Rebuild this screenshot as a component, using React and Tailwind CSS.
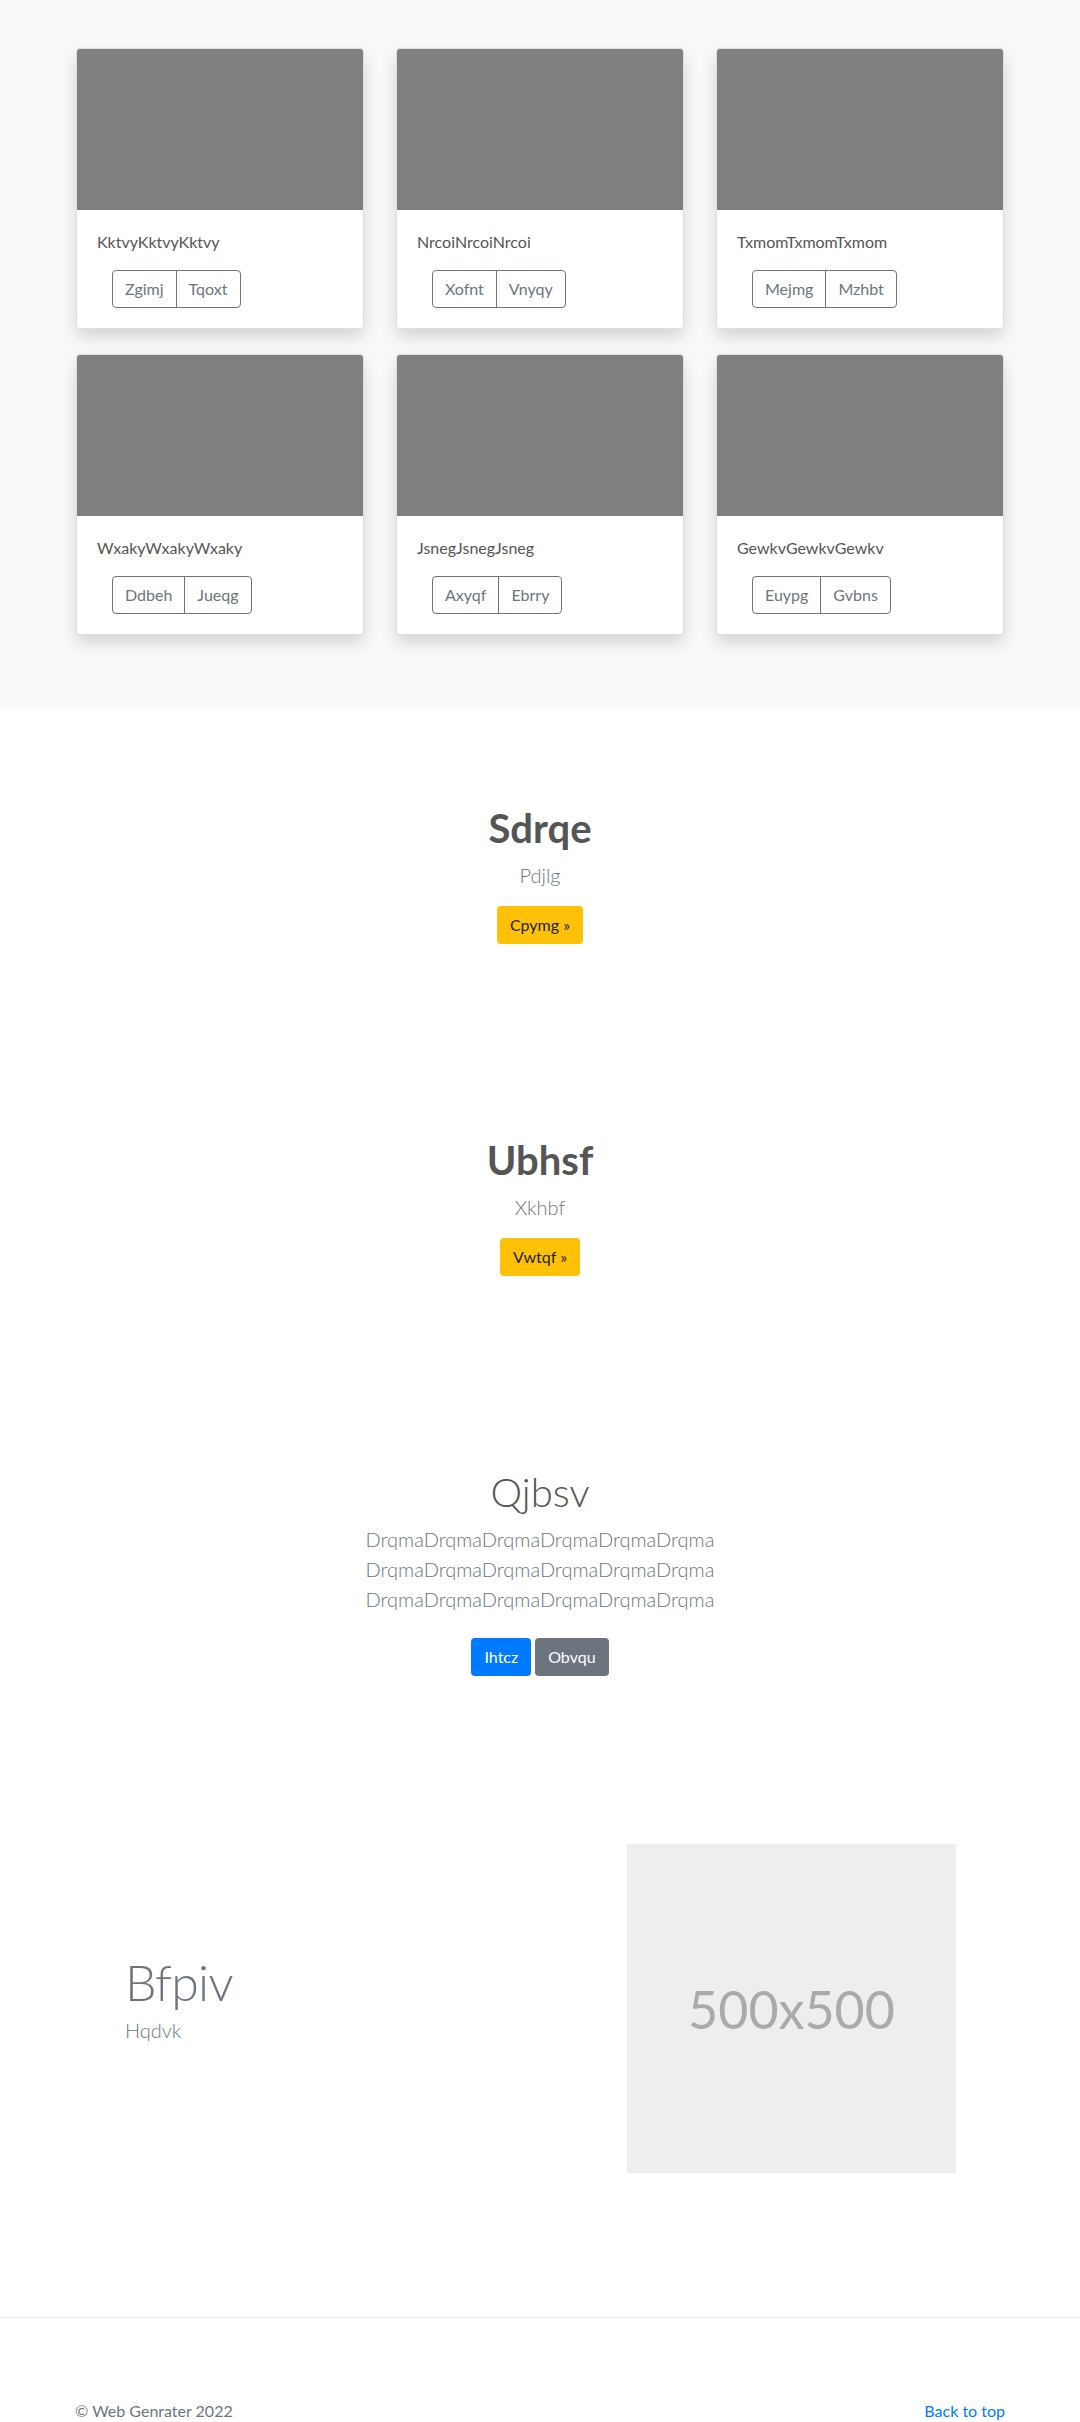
import React from 'react'

const cards = [
  { title: 'KktvyKktvyKktvy', actions: ['Zgimj', 'Tqoxt'] },
  { title: 'NrcoiNrcoiNrcoi', actions: ['Xofnt', 'Vnyqy'] },
  { title: 'TxmomTxmomTxmom', actions: ['Mejmg', 'Mzhbt'] },
  { title: 'WxakyWxakyWxaky', actions: ['Ddbeh', 'Jueqg'] },
  { title: 'JsnegJsnegJsneg', actions: ['Axyqf', 'Ebrry'] },
  { title: 'GewkvGewkvGewkv', actions: ['Euypg', 'Gvbns'] },
]

const Card = ({ title, actions }) => (
  <div className="flex h-[281px] flex-col overflow-hidden rounded border border-black/[.125] bg-white shadow-[0_8px_16px_rgba(0,0,0,0.15)]">
    <div className="h-[161px] bg-[#808080]" />
    <div className="p-5">
      <p className="mb-4 text-base leading-6 text-[#555]">{title}</p>
      <div className="ml-[15px] flex">
        <button
          type="button"
          className="rounded-l border border-[#6c757d] px-3 py-1.5 text-base leading-6 text-[#6c757d]"
        >
          {actions[0]}
        </button>
        <button
          type="button"
          className="-ml-px rounded-r border border-[#6c757d] px-3 py-1.5 text-base leading-6 text-[#6c757d]"
        >
          {actions[1]}
        </button>
      </div>
    </div>
  </div>
)

const Promo = ({ title, lead, cta }) => (
  <section className="py-[96px] text-center">
    <h1 className="mb-2 text-[40px] font-bold leading-[48px] text-[#555]">{title}</h1>
    <p className="mb-4 text-xl font-light leading-[30px] text-[#6c757d]">{lead}</p>
    <div className="flex justify-center">
      <button
        type="button"
        className="rounded border border-transparent bg-[#ffc107] px-3 py-1.5 text-base leading-6 text-[#212529]"
      >
        {cta} »
      </button>
    </div>
  </section>
)

export default function App() {
  return (
    <div className="min-h-screen bg-white font-['Lato',sans-serif]">
      {/* album */}
      <section className="bg-[#f8f9fa] pb-[73px] pt-12">
        <div className="mx-auto grid w-[928px] grid-cols-3 gap-x-8 gap-y-[25px]">
          {cards.map((it) => (
            <Card key={it.title} title={it.title} actions={it.actions} />
          ))}
        </div>
      </section>

      <Promo title="Sdrqe" lead="Pdjlg" cta="Cpymg" />
      <Promo title="Ubhsf" lead="Xkhbf" cta="Vwtqf" />

      {/* jumbotron */}
      <section className="pb-[160px] pt-[96px] text-center">
        <h1 className="mb-2 text-[40px] font-light leading-[48px] text-[#555]">Qjbsv</h1>
        <p className="mx-auto mb-4 max-w-[456px] text-xl font-light leading-[30px] text-[#6c757d]">
          DrqmaDrqmaDrqmaDrqmaDrqmaDrqma DrqmaDrqmaDrqmaDrqmaDrqmaDrqma DrqmaDrqmaDrqmaDrqmaDrqmaDrqma
        </p>
        <div className="flex justify-center gap-1 py-2">
          <button
            type="button"
            className="rounded border border-transparent bg-[#007bff] px-3 py-1.5 text-base leading-6 text-white"
          >
            Ihtcz
          </button>
          <button
            type="button"
            className="rounded border border-transparent bg-[#6c757d] px-3 py-1.5 text-base leading-6 text-white"
          >
            Obvqu
          </button>
        </div>
      </section>

      {/* featurette */}
      <div className="mx-auto flex w-[960px] items-center">
        <div className="w-[567px] pl-[65px]">
          <h2 className="mb-2 text-[50px] font-light leading-none tracking-[-0.05rem] text-[#6c757d]">Bfpiv</h2>
          <p className="mb-4 text-xl font-light leading-[30px] text-[#6c757d]">Hqdvk</p>
        </div>
        <div className="flex h-[329px] w-[329px] items-center justify-center bg-[#eee]">
          <span className="text-[52px] text-[#aaa]">500x500</span>
        </div>
      </div>

      <hr className="mt-[144px] border-t border-[#e5e5e5]" />

      <footer className="pb-12 pt-[81px] text-[#6c757d]">
        <div className="mx-auto flex w-[930px] justify-between text-base leading-6">
          <p>© Web Genrater 2022</p>
          <a href="#" className="text-[#007bff]">
            Back to top
          </a>
        </div>
      </footer>
    </div>
  )
}
